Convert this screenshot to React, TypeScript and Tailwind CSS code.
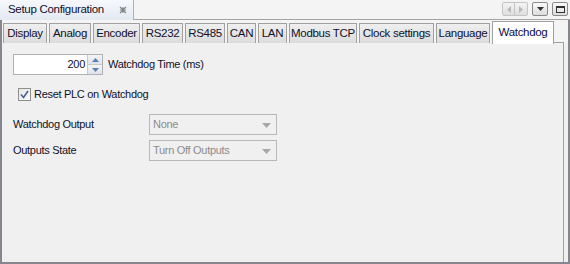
const tabs = [
  { label: "Display", w: 44 },
  { label: "Analog", w: 42 },
  { label: "Encoder", w: 47 },
  { label: "RS232", w: 41 },
  { label: "RS485", w: 40 },
  { label: "CAN", w: 29 },
  { label: "LAN", w: 29 },
  { label: "Modbus TCP", w: 68 },
  { label: "Clock settings", w: 75 },
  { label: "Language", w: 54 },
];

function Select({ value }: { value: string }) {
  return (
    <div className="w-[128px] h-[21px] border border-[#b8b8b8] bg-[#f0f0f0] flex items-center pl-[3px] text-[#8c8c8c]">
      <span className="flex-1 whitespace-nowrap">{value}</span>
      <svg width="9" height="5" viewBox="0 0 9 5" className="mr-[5px] mt-[3px]">
        <path d="M0 0h9L4.5 5z" fill="#a8a8a8" />
      </svg>
    </div>
  );
}

export default function App() {
  return (
    <div
      className="w-[570px] h-[264px] flex flex-col bg-[#f0f0f0] text-[11px] tracking-[-0.3px] text-[#10102a] whitespace-nowrap"
      style={{ fontFamily: "'Liberation Sans', Arial, sans-serif" }}
    >
      {/* header */}
      <div className="h-[20px] flex bg-[#f4f4f4]">
        <div className="w-[134px] flex items-center pl-[8px] pr-[6px] bg-gradient-to-b from-[#f6f8fc] to-[#e3e9f3] border-r border-[#a9b0bb]">
          <span className="flex-1 text-[11.5px]">Setup Configuration</span>
          <svg width="8" height="8" viewBox="0 0 8 8">
            <path d="M1 1l6 6M7 1L1 7M1 4h6M4 1v6" stroke="#8a8a8a" strokeWidth="1.2" />
          </svg>
        </div>
        <div className="flex-1 flex items-start justify-end gap-[4px] pt-[2px] pr-[2px] border-b border-[#a4a4a4]">
          <div className="flex h-[14px] border border-[#c4c4c4] rounded-[2px] bg-gradient-to-b from-[#f4f4f4] to-[#dedede]">
            <div className="w-[12px] flex items-center justify-center border-r border-[#c4c4c4]">
              <svg width="4" height="7" viewBox="0 0 4 7"><path d="M4 0v7L0 3.5z" fill="#b8b8b8" /></svg>
            </div>
            <div className="w-[12px] flex items-center justify-center">
              <svg width="4" height="7" viewBox="0 0 4 7"><path d="M0 0v7l4-3.5z" fill="#b8b8b8" /></svg>
            </div>
          </div>
          <div className="w-[16px] h-[14px] flex items-center justify-center border border-[#8a8a8a] rounded-[2px] bg-gradient-to-b from-[#fafafa] to-[#dcdcdc]">
            <svg width="7" height="4" viewBox="0 0 7 4"><path d="M0 0h7L3.5 4z" fill="#333" /></svg>
          </div>
          <div className="w-[16px] h-[14px] flex items-center justify-center border border-[#8a8a8a] rounded-[2px] bg-gradient-to-b from-[#fafafa] to-[#dcdcdc]">
            <div className="w-[9px] h-[7px] border border-[#333] border-t-2" />
          </div>
        </div>
      </div>

      {/* body */}
      <div className="flex-1 flex flex-col border-l-2 border-r-2 border-b-2 border-[#86868e]">
        <div className="h-[23px] flex items-end pl-[1px] bg-[#f4f4f4]">
          {tabs.map((t) => (
            <div
              key={t.label}
              className="h-[20px] mr-[2px] flex items-center justify-center border border-b-0 border-[#a0a0a0] bg-gradient-to-b from-[#efefef] to-[#dcdcdc] text-[11.5px]"
              style={{ width: t.w }}
            >
              {t.label}
            </div>
          ))}
          <div className="w-[62px] h-[23px] flex items-center justify-center border border-b-0 border-[#a0a0a0] bg-white text-[#0c0c50] text-[11.5px] -mb-[1px] relative">
            Watchdog
          </div>
          <div className="flex-1 h-[1px] bg-[#a0a0a0] mr-[4px]" />
        </div>

        <div className="flex-1 flex flex-col mr-[4px] border-r border-[#a0a0a0] pl-[11px] pt-[11px]">
          <div className="flex items-center">
            <div className="w-[90px] h-[21px] flex border border-[#b0b0b0] bg-white">
              <span className="flex-1 text-right pr-[2px] leading-[19px]">200</span>
              <div className="w-[15px] flex flex-col border-l border-[#c8c8c8]">
                <div className="flex-1 flex items-center justify-center bg-gradient-to-b from-[#f4f4f4] to-[#dde4ee] border-b border-[#c8c8c8]">
                  <svg width="7" height="4" viewBox="0 0 7 4"><path d="M0 4h7L3.5 0z" fill="#5d7fb0" /></svg>
                </div>
                <div className="flex-1 flex items-center justify-center bg-gradient-to-b from-[#f4f4f4] to-[#dde4ee]">
                  <svg width="7" height="4" viewBox="0 0 7 4"><path d="M0 0h7L3.5 4z" fill="#5d7fb0" /></svg>
                </div>
              </div>
            </div>
            <span className="ml-[5px]">Watchdog Time (ms)</span>
          </div>

          <div className="flex items-center mt-[11px] ml-[5px]">
            <div className="w-[13px] h-[13px] border border-[#8e8f8f] bg-gradient-to-br from-[#e6e6e6] to-[#fafafa] flex items-center justify-center">
              <svg width="9" height="9" viewBox="0 0 9 9">
                <path d="M1 4.5l2.5 3L8 1" fill="none" stroke="#4a5f97" strokeWidth="1.6" />
              </svg>
            </div>
            <span className="ml-[3px]">Reset PLC on Watchdog</span>
          </div>

          <div className="flex items-center mt-[11px]">
            <span className="w-[136px]">Watchdog Output</span>
            <Select value="None" />
          </div>
          <div className="flex items-center mt-[5px]">
            <span className="w-[136px]">Outputs State</span>
            <Select value="Turn Off Outputs" />
          </div>
        </div>
      </div>
    </div>
  );
}
